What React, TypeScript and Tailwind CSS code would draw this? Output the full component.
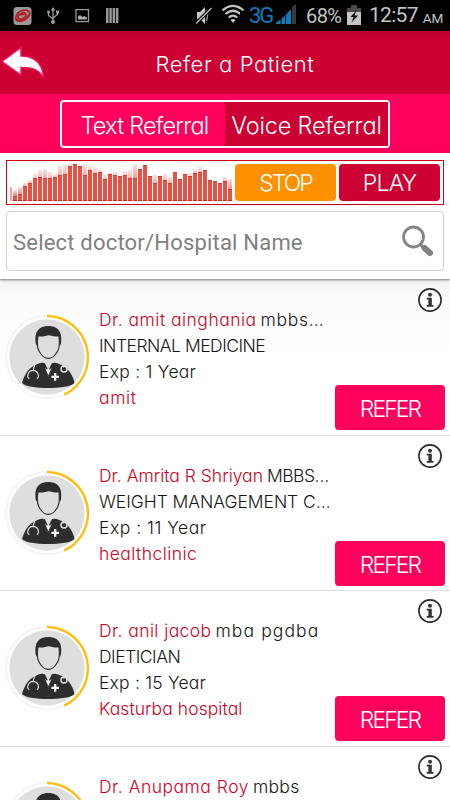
import React from "react";

const BARS: [number, number][] = [
  [11, 4], [14, 6], [18, 14], [21, 17], [27, 22], [31, 23], [32, 22], [29, 22], [27, 23], [35, 25],
  [36, 26], [37, 34], [37, 37], [35, 34], [37, 25], [35, 30], [34, 27], [32, 28], [27, 21], [28, 26],
  [29, 25], [25, 24], [30, 25], [31, 22], [37, 22], [32, 32], [36, 36], [25, 24], [26, 17], [25, 24],
  [27, 20], [24, 17], [29, 28], [22, 21], [27, 26], [28, 24], [32, 27], [34, 28], [31, 31], [21, 21],
  [20, 20], [18, 17], [24, 19], [22, 11],
];

type Doctor = {
  name: string;
  nameCls: string;
  degree: string;
  degreeCls: string;
  field?: string;
  fieldCls?: string;
  exp?: string;
  expCls?: string;
  clinic?: string;
  clinicCls?: string;
  rowCls: string;
};

const DOCTORS: Doctor[] = [
  { name: "Dr. amit ainghania", nameCls: "tracking-[0.48px]", degree: "mbbs…", degreeCls: "tracking-[0.7px]", field: "INTERNAL MEDICINE", fieldCls: "tracking-[-0.5px]", exp: "Exp : 1 Year", expCls: "tracking-[0.25px]", clinic: "amit", clinicCls: "tracking-[0.6px]", rowCls: "h-[156px]" },
  { name: "Dr. Amrita R Shriyan", nameCls: "", degree: "MBBS…", degreeCls: "tracking-[-0.5px]", field: "WEIGHT MANAGEMENT C…", fieldCls: "tracking-[-0.05px]", exp: "Exp : 11 Year", expCls: "tracking-[0.5px]", clinic: "healthclinic", clinicCls: "tracking-[0.43px]", rowCls: "h-[155px]" },
  { name: "Dr. anil jacob", nameCls: "tracking-[0.4px]", degree: "mba pgdba", degreeCls: "tracking-[1.1px]", field: "DIETICIAN", fieldCls: "tracking-[-0.5px]", exp: "Exp : 15 Year", expCls: "tracking-[0.2px]", clinic: "Kasturba hospital", clinicCls: "tracking-[0.07px]", rowCls: "h-[156px]" },
  { name: "Dr. Anupama Roy", nameCls: "tracking-[0.5px]", degree: "mbbs", degreeCls: "tracking-[0.3px]", rowCls: "h-[156px]" },
];

function Avatar() {
  return (
    <svg className="mt-8 h-[90px] w-[88px] shrink-0" viewBox="12 36 264 270">
      <circle cx="142" cy="171" r="124" fill="#fff" stroke="#f5f5f5" strokeWidth="6" />
      <circle cx="141" cy="171" r="113" fill="#dedede" />
      <path d="M141 48A124 124 0 0 1 193 284" fill="none" stroke="#fdbf0f" strokeWidth="7" />
      <path d="M126 188C105 192 86 204 77 222C69 238 66 246 67 250C80 269 208 269 223 250C224 246 220 234 212 220C203 203 186 192 164 188Z" fill="#2d2d2d" />
      <path d="M129 185L145 232L161 185Z" fill="#dedede" />
      <path d="M126 190L134 189L145 211L156 189L164 190L145 232Z" fill="#2d2d2d" />
      <path d="M135 203L145 226L155 203L149 209L145 205L141 209Z" fill="#f7f7f7" />
      <path d="M107 130C102 94 117 78 145 78C173 78 188 94 183 130L180 138L175 110L115 110L110 138Z" fill="#2d2d2d" />
      <path d="M114 107C130 111 135 104 146 104C158 104 163 111 177 107C178 121 181 139 173 153C163 171 156 175 145 175C134 175 127 171 117 153C109 139 112 121 114 107Z" fill="#dedede" stroke="#2d2d2d" strokeWidth="3.5" />
      <g fill="none" stroke="#dedede" strokeWidth="3.5">
        <path d="M109 188C101 195 101 206 99 213M88 236C78 232 85 211 99 211C114 211 120 230 111 236" />
        <path d="M179 187C189 190 191 198 192 203" />
        <circle cx="192" cy="207" r="9" strokeWidth="4.5" />
      </g>
      <path d="M162 219h7v8h8v7h-8v8h-7v-8h-8v-7h8Z" fill="#f3f3f3" />
    </svg>
  );
}

function Info() {
  return (
    <svg className="mr-[3px] h-6 w-6" viewBox="0 0 24 24">
      <circle cx="12" cy="12" r="11.1" fill="#fff" stroke="#2b2b2b" strokeWidth="1.6" />
      <circle cx="12" cy="6.8" r="2" fill="#333" />
      <path d="M8.7 9.8H13.8V17.1H15.5V18.8H8.7V17.1H10.4V11.4H8.7Z" fill="#333" />
    </svg>
  );
}

function DoctorRow({ d }: { d: Doctor }) {
  return (
    <div className={`flex shrink-0 border-b border-[#dcdcdc] pl-1 pr-[5px] ${d.rowCls}`}>
      <Avatar />
      <div className="ml-[7px] flex-1 pt-[27px] text-[17.5px] leading-[26px] whitespace-nowrap text-[#151515]">
        <div className="flex gap-1">
          <span className={`text-[#cc0022] ${d.nameCls}`}>{d.name}</span>
          <span className={d.degreeCls}>{d.degree}</span>
        </div>
        {d.field && <div className={d.fieldCls}>{d.field}</div>}
        {d.exp && <div className={d.expCls}>{d.exp}</div>}
        {d.clinic && <div className={`text-[#cc0022] ${d.clinicCls}`}>{d.clinic}</div>}
      </div>
      <div className="flex w-[110px] shrink-0 flex-col items-end pt-2">
        <Info />
        <button className="mt-[73px] h-[45px] w-[110px] rounded-[4px] bg-[#ff005c] pt-[3px] text-[23px] leading-none tracking-[-1.9px] text-white">REFER</button>
      </div>
    </div>
  );
}

function StatusBar() {
  return (
    <div className="flex h-[31px] shrink-0 items-center bg-black font-['Roboto',sans-serif] font-normal text-[#c4c4c4]">
      <svg className="h-[31px] w-[240px] shrink-0" viewBox="0 0 240 31">
        <rect x="13.5" y="7" width="18" height="18" rx="3.5" fill="#999" />
        <g fill="none" stroke="#b71c22" strokeWidth="1.7">
          <ellipse cx="22.7" cy="15.5" rx="7.5" ry="4.7" transform="rotate(-28 22.7 15.5)" />
          <ellipse cx="22" cy="16" rx="4.3" ry="2.5" transform="rotate(-28 22 16)" />
          <path d="M15.5 19C18 23 25 21 29 15M20 15l5-1" />
        </g>
        <g fill="none" stroke="#999" strokeWidth="1.3">
          <path d="M53 9v13M48.5 12v3.5l4.5 3.5M57.5 12v2.5L53 18" />
        </g>
        <path d="M53 7l2.3 3.5h-4.6ZM56 10.500h3v3h-3Z" fill="#999" />
        <circle cx="48.6" cy="12" r="1.6" fill="#999" />
        <circle cx="53" cy="22" r="2" fill="#999" />
        <rect x="76" y="9.6" width="12.5" height="12" fill="none" stroke="#999" strokeWidth="1.3" />
        <path d="M78 19.5v-3l2-1.5 2.500 2 2-1 2.300 1.500v2Z" fill="#aaa" />
        <path d="M106 8h2.500v15H106ZM109.300 8h2.500v15h-2.500ZM112.600 8h2.500v15h-2.500ZM115.900 8h2.500v15h-2.500Z" fill="#999" />
        <path d="M197 12h3l5-5v17l-5-5h-3Z" fill="#c4c4c4" />
        <path d="M206 10c2 3 2 8 0 11" fill="none" stroke="#888" strokeWidth="1.5" />
        <path d="M196 23.500L211.500 8" stroke="#000" strokeWidth="3.5" />
        <path d="M196 23.500L211.500 8" stroke="#c4c4c4" strokeWidth="1.3" />
        <g fill="none" stroke="#c4c4c4" strokeWidth="2.2">
          <path d="M222.500 10.300Q233 1.500 243.500 10.300M225.500 14Q233 7.500 240.500 14M228.700 17.500Q233 13.800 237.300 17.500" />
        </g>
        <path d="M230.500 20Q233 18 235.500 20L233 23Z" fill="#c4c4c4" />
      </svg>
      <svg className="-ml-px h-[31px] w-[10px] shrink-0" viewBox="239 0 10 31">
        <path d="M239 7.200L243.500 10.300" fill="none" stroke="#c4c4c4" strokeWidth="2.2" />
      </svg>
      <span className="w-[26px] text-[22px] tracking-[-2px] text-[#0b7cb8]">3G</span>
      <svg className="h-[31px] w-[22px] shrink-0" viewBox="275 0 22 31">
        <path d="M276 24v-1.500l4.500-3V24ZM281.500 24v-5.500l3.500-3V24ZM286 24V14.500l4-3.500v13Z" fill="#0b7cb8" />
        <path d="M287.500 24V13l3.500-4v15Z" fill="#0b7cb8" />
        <path d="M292 24V7l4-3v20Z" fill="#3b3b3b" />
      </svg>
      <span className="ml-[9px] w-[41px] shrink-0 text-[20px] tracking-[-0.6px]">68%</span>
      <svg className="h-[31px] w-[14px] shrink-0" viewBox="0 0 14 31">
        <path d="M4 5h6v3h4v4H0V8h4Z" fill="#4a4a4a" />
        <path d="M0 12h14v13H0Z" fill="#c4c4c4" />
        <path d="M9.500 10L3.500 17h3l-2 5.500 6.500-7H7.500Z" fill="#111" />
      </svg>
      <span className="ml-[8px] text-[21px] tracking-[-0.7px]">12:57</span>
      <span className="mt-[5px] ml-[5px] text-[13.500px]">AM</span>
    </div>
  );
}

export default function App() {
  return (
    <div className="flex h-[800px] w-[450px] flex-col overflow-hidden bg-white font-['Inter','Liberation_Sans',sans-serif] font-light [font-feature-settings:'cv11','ss03']">
      <StatusBar />
      <header className="flex h-[63px] shrink-0 items-center bg-linear-to-b from-[#b8002c] to-[#cc0033] to-15% text-white">
        <svg className="mt-px h-9 w-[48px] shrink-0" viewBox="0 0 48 36">
          <path d="M2 16.5L21 2.5V11C34 11 43 18 43.500 33C39 25 33 22.500 21 22.500V30Z" fill="#fff" stroke="#f1135b" strokeWidth="1.5" />
        </svg>
        <h1 className="ml-[107.500px] pt-[2px] text-[22px] leading-none tracking-[0.55px] whitespace-nowrap">Refer a Patient</h1>
      </header>
      <div className="flex h-[59px] shrink-0 justify-center bg-[#ff005c] pt-[6px]">
        <div className="flex h-12 w-[330px] rounded-[4px] border-[2.5px] border-white text-[23.5px] leading-none whitespace-nowrap text-white">
          <button className="w-[163px] pt-[3px] pl-[2px] text-center tracking-[-0.8px]">Text Referral</button>
          <button className="flex-1 bg-[#cc0033] pt-[3px] text-center tracking-[-0.2px]">Voice Referral</button>
        </div>
      </div>
      <section className="relative z-10 flex h-[126px] shrink-0 flex-col bg-white px-[6px] pt-[7px] shadow-[0_1px_2px_#777,0_4px_12px_rgba(0,0,0,0.08)]">
        <div className="flex h-[45px] w-[438px] items-center gap-[3px] border border-[#cc0011]">
          <div className="flex h-[37px] w-[225px] shrink-0 items-end gap-px pl-[3px]">
            <div className="h-[14px] w-[2px] shrink-0 bg-[#f0a7a2]" />
            {BARS.map(([light, solid], i) => (
              <div key={i} className="flex w-1 shrink-0 flex-col justify-end border-b border-[#e51c12] bg-linear-to-b from-[#fbe4e2] to-[#ee938c] to-45%" style={{ height: light }}>
                <div className="border-t border-[#db3931] bg-[#e55346]" style={{ height: solid }} />
              </div>
            ))}
          </div>
          <button className="h-[37px] w-[101px] shrink-0 rounded-[4px] bg-[#ff9100] pt-[2px] text-[23px] leading-none tracking-[-2px] text-white">STOP</button>
          <button className="h-[37px] w-[101px] shrink-0 rounded-[4px] bg-[#cc0033] pt-[2px] text-[23px] leading-none tracking-[-0.8px] text-white">PLAY</button>
        </div>
        <div className="mt-[6px] flex h-[60px] w-[438px] items-center justify-between rounded-[4px] border border-[#cfcfcf] pr-[9px] pl-[6px] font-['Roboto',sans-serif] text-[22px] font-normal text-[#808080]">
          <span className="pt-[2px] tracking-[0.2px] whitespace-nowrap">Select doctor/Hospital Name</span>
          <svg className="h-8 w-[33px]" viewBox="0 0 33 32">
            <circle cx="12.5" cy="12" r="10" fill="none" stroke="#858585" strokeWidth="2.8" />
            <path d="M19.500 19.500L23 23" stroke="#858585" strokeWidth="3" />
            <path d="M23.500 23L29 28" stroke="#808080" strokeWidth="6" strokeLinecap="round" />
          </svg>
        </div>
      </section>
      <main className="flex flex-1 flex-col overflow-hidden bg-linear-to-b from-[#fafafa] to-white to-15% pt-px">
        {DOCTORS.map((d) => (
          <DoctorRow key={d.name} d={d} />
        ))}
      </main>
    </div>
  );
}
